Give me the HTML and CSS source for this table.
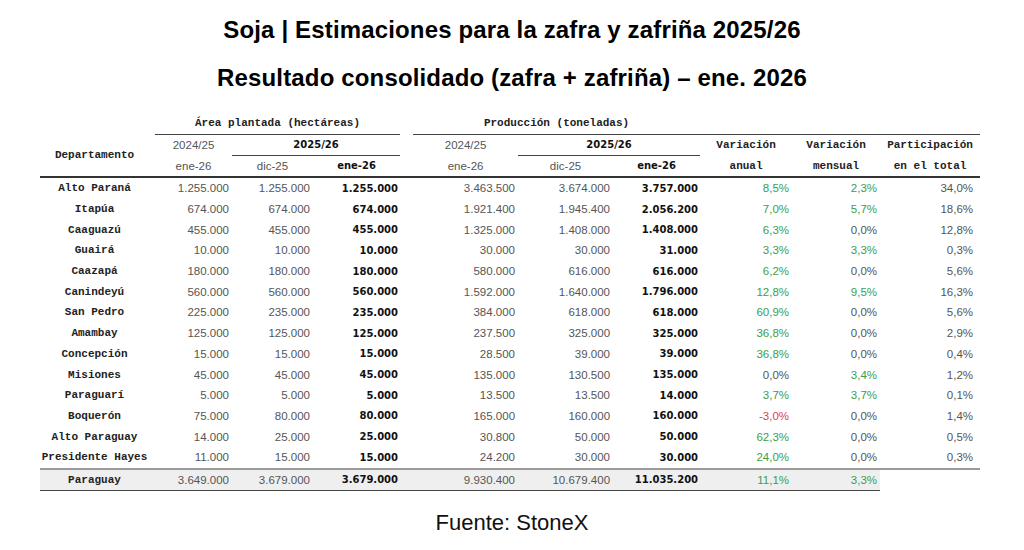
FILE: index.html
```html
<!DOCTYPE html>
<html lang="es">
<head>
<meta charset="utf-8">
<title>Soja | Estimaciones para la zafra y zafriña 2025/26</title>
<link rel="stylesheet" href="styles.css">
</head>
<body>
<div class="page">
  <h1 class="title">Soja | Estimaciones para la zafra y zafriña 2025/26</h1>
  <h2 class="title sub">Resultado consolidado (zafra + zafriña) – ene. 2026</h2>
  <table class="tbl">
    <colgroup>
      <col class="c-dep"><col class="c-a1"><col class="c-a2"><col class="c-a3"><col class="c-sp">
      <col class="c-p1"><col class="c-p2"><col class="c-p3"><col class="c-v1"><col class="c-v2"><col class="c-pt">
    </colgroup>
    <thead>
      <tr class="h1">
        <th></th>
        <th colspan="3" class="mono line">Área plantada (hectáreas)</th>
        <th></th>
        <th colspan="3" class="mono line">Producción (toneladas)</th>
        <th class="line"></th><th class="line"></th><th class="line"></th>
      </tr>
      <tr class="h2">
        <th rowspan="2" class="mono dep">Departamento</th>
        <th class="reg">2024/25</th>
        <th colspan="2" class="bold line">2025/26</th>
        <th></th>
        <th class="reg">2024/25</th>
        <th colspan="2" class="bold line">2025/26</th>
        <th class="mono">Variación</th>
        <th class="mono">Variación</th>
        <th class="mono">Participación</th>
      </tr>
      <tr class="h3">
        <th class="reg">ene-26</th>
        <th class="reg">dic-25</th>
        <th class="bold">ene-26</th>
        <th></th>
        <th class="reg">ene-26</th>
        <th class="reg">dic-25</th>
        <th class="bold">ene-26</th>
        <th class="mono">anual</th>
        <th class="mono">mensual</th>
        <th class="mono">en el total</th>
      </tr>
    </thead>
    <tbody>
      <tr><td class="dep">Alto Paraná</td><td>1.255.000</td><td>1.255.000</td><td class="b">1.255.000</td><td></td><td>3.463.500</td><td>3.674.000</td><td class="b">3.757.000</td><td class="g">8,5%</td><td class="g">2,3%</td><td class="pt">34,0%</td></tr>
      <tr><td class="dep">Itapúa</td><td>674.000</td><td>674.000</td><td class="b">674.000</td><td></td><td>1.921.400</td><td>1.945.400</td><td class="b">2.056.200</td><td class="g">7,0%</td><td class="g">5,7%</td><td class="pt">18,6%</td></tr>
      <tr><td class="dep">Caaguazú</td><td>455.000</td><td>455.000</td><td class="b">455.000</td><td></td><td>1.325.000</td><td>1.408.000</td><td class="b">1.408.000</td><td class="g">6,3%</td><td>0,0%</td><td class="pt">12,8%</td></tr>
      <tr><td class="dep">Guairá</td><td>10.000</td><td>10.000</td><td class="b">10.000</td><td></td><td>30.000</td><td>30.000</td><td class="b">31.000</td><td class="g">3,3%</td><td class="g">3,3%</td><td class="pt">0,3%</td></tr>
      <tr><td class="dep">Caazapá</td><td>180.000</td><td>180.000</td><td class="b">180.000</td><td></td><td>580.000</td><td>616.000</td><td class="b">616.000</td><td class="g">6,2%</td><td>0,0%</td><td class="pt">5,6%</td></tr>
      <tr><td class="dep">Canindeyú</td><td>560.000</td><td>560.000</td><td class="b">560.000</td><td></td><td>1.592.000</td><td>1.640.000</td><td class="b">1.796.000</td><td class="g">12,8%</td><td class="g">9,5%</td><td class="pt">16,3%</td></tr>
      <tr><td class="dep">San Pedro</td><td>225.000</td><td>235.000</td><td class="b">235.000</td><td></td><td>384.000</td><td>618.000</td><td class="b">618.000</td><td class="g">60,9%</td><td>0,0%</td><td class="pt">5,6%</td></tr>
      <tr><td class="dep">Amambay</td><td>125.000</td><td>125.000</td><td class="b">125.000</td><td></td><td>237.500</td><td>325.000</td><td class="b">325.000</td><td class="g">36,8%</td><td>0,0%</td><td class="pt">2,9%</td></tr>
      <tr><td class="dep">Concepción</td><td>15.000</td><td>15.000</td><td class="b">15.000</td><td></td><td>28.500</td><td>39.000</td><td class="b">39.000</td><td class="g">36,8%</td><td>0,0%</td><td class="pt">0,4%</td></tr>
      <tr><td class="dep">Misiones</td><td>45.000</td><td>45.000</td><td class="b">45.000</td><td></td><td>135.000</td><td>130.500</td><td class="b">135.000</td><td>0,0%</td><td class="g">3,4%</td><td class="pt">1,2%</td></tr>
      <tr><td class="dep">Paraguarí</td><td>5.000</td><td>5.000</td><td class="b">5.000</td><td></td><td>13.500</td><td>13.500</td><td class="b">14.000</td><td class="g">3,7%</td><td class="g">3,7%</td><td class="pt">0,1%</td></tr>
      <tr><td class="dep">Boquerón</td><td>75.000</td><td>80.000</td><td class="b">80.000</td><td></td><td>165.000</td><td>160.000</td><td class="b">160.000</td><td class="r">-3,0%</td><td>0,0%</td><td class="pt">1,4%</td></tr>
      <tr><td class="dep">Alto Paraguay</td><td>14.000</td><td>25.000</td><td class="b">25.000</td><td></td><td>30.800</td><td>50.000</td><td class="b">50.000</td><td class="g">62,3%</td><td>0,0%</td><td class="pt">0,5%</td></tr>
      <tr class="last"><td class="dep">Presidente Hayes</td><td>11.000</td><td>15.000</td><td class="b">15.000</td><td></td><td>24.200</td><td>30.000</td><td class="b">30.000</td><td class="g">24,0%</td><td>0,0%</td><td class="pt">0,3%</td></tr>
      <tr class="total"><td class="dep">Paraguay</td><td>3.649.000</td><td>3.679.000</td><td class="b">3.679.000</td><td></td><td>9.930.400</td><td>10.679.400</td><td class="b">11.035.200</td><td class="g">11,1%</td><td class="g">3,3%</td><td class="blank"></td></tr>
    </tbody>
  </table>
  <p class="source">Fuente: StoneX</p>
</div>
</body>
</html>
```

FILE: styles.css
```css
html, body {
  margin: 0;
  padding: 0;
  background: #ffffff;
}

.page {
  width: 1024px;
  height: 550px;
  overflow: hidden;
  font-family: "Liberation Sans", Arial, sans-serif;
  color: #000;
}

.title {
  margin: 0;
  text-align: center;
  font-family: "Liberation Sans", Arial, sans-serif;
  font-weight: bold;
  font-size: 24px;
  line-height: 26px;
  padding-top: 17px;
  letter-spacing: 0.15px;
  color: #000;
}

.title.sub {
  padding-top: 22px;
}

.tbl {
  margin: 22px 0 0 40px;
  width: 940px;
  border-collapse: collapse;
  table-layout: fixed;
}

.c-dep { width: 115px; }
.c-a1 { width: 77px; }
.c-a2 { width: 81px; }
.c-a3 { width: 87px; }
.c-sp { width: 13px; }
.c-p1 { width: 105px; }
.c-p2 { width: 95px; }
.c-p3 { width: 87px; }
.c-v1 { width: 92px; }
.c-v2 { width: 88px; }
.c-pt { width: 100px; }

.tbl th {
  padding: 0;
  font-weight: normal;
  text-align: center;
  vertical-align: middle;
}

.tbl .h1 { height: 21px; }
.tbl .h2 { height: 21px; }
.tbl .h3 { height: 22px; }

.tbl th.line {
  border-bottom: 1.5px solid #444;
}

.tbl .h3 th {
  border-bottom: 2px solid #333;
}

.tbl th.mono {
  font-family: "Liberation Mono", "Courier New", monospace;
  font-weight: bold;
  font-size: 11px;
  color: #222;
}

.tbl th.dep {
  border-bottom: 2px solid #333;
  padding-right: 6px;
}

.tbl th.reg {
  font-family: "Liberation Sans", Arial, sans-serif;
  font-weight: normal;
  font-size: 11.5px;
  color: #555;
}

.tbl th.bold {
  font-family: "DejaVu Sans", Verdana, sans-serif;
  font-weight: bold;
  font-size: 10px;
  color: #111;
}

.tbl .h1 th.mono {
  vertical-align: top;
  padding-top: 4px;
}

.tbl td {
  height: 20.7px;
  padding: 0 3px 0 0;
  text-align: right;
  font-family: "Liberation Sans", Arial, sans-serif;
  font-size: 11.5px;
  color: #555;
  white-space: nowrap;
}

.tbl td.dep {
  text-align: center;
  padding-right: 6px;
  font-family: "Liberation Mono", "Courier New", monospace;
  font-weight: bold;
  font-size: 11px;
  color: #222;
}

.tbl td.b {
  font-family: "DejaVu Sans", Verdana, sans-serif;
  font-weight: bold;
  font-size: 10px;
  color: #111;
  padding-right: 2px;
}

.tbl td.g { color: #3c9e4c; }
.tbl td.r { color: #e23a4c; }
.tbl td.pt { padding-right: 7px; }

.tbl tr.last td {
  border-bottom: 2px solid #9a9a9a;
}

.tbl tr.total td {
  background: #efefef;
  border-bottom: 1.5px solid #444;
  height: 20px;
}

.tbl tr.total td.blank {
  background: #ffffff;
  border-bottom: none;
}

.source {
  margin: 19px 0 0 0;
  text-align: center;
  font-family: "Liberation Sans", Arial, sans-serif;
  font-size: 22px;
  line-height: 26px;
  color: #111;
}
```
